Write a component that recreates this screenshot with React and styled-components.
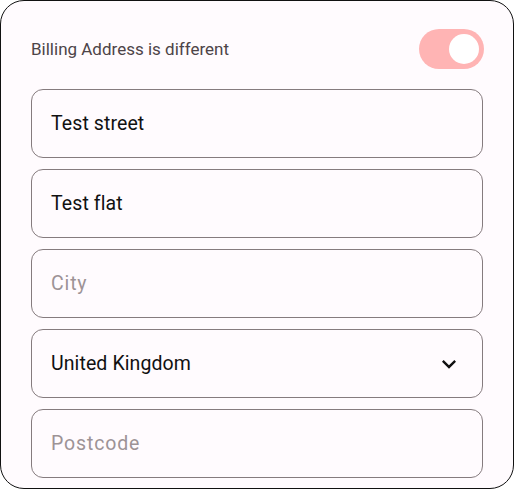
import React, { useState } from "react"
import styled, { createGlobalStyle } from "styled-components"

const Global = createGlobalStyle`
  html, body { margin: 0; padding: 0; background: #ffffff; }
  body { font-family: Roboto, "Noto Sans", sans-serif; }
  * { box-sizing: border-box; }
`

const Card = styled.div`
  width: 514px;
  height: 489px;
  border: 1.5px solid #111;
  border-radius: 24px;
  background: #fffbfe;
  padding: 27px 30px 0 30px;
  display: flex;
  flex-direction: column;
  overflow: hidden;
`

const Header = styled.div`
  display: flex;
  align-items: center;
  justify-content: space-between;
  height: 41px;
  margin-bottom: 20px;
`

const Title = styled.span`
  font-size: 17px;
  color: #4d4448;
`

const Track = styled.button`
  width: 65px;
  height: 40px;
  border: none;
  border-radius: 20px;
  background: ${(p) => (p.$on ? "#ffb4b4" : "#e7e0ec")};
  display: flex;
  align-items: center;
  justify-content: ${(p) => (p.$on ? "flex-end" : "flex-start")};
  padding: 0 5px;
  margin-right: -1px;
  cursor: pointer;
`

const Thumb = styled.span`
  width: 30px;
  height: 30px;
  border-radius: 50%;
  background: #ffffff;
`

const Fields = styled.div`
  display: flex;
  flex-direction: column;
  gap: 11px;
`

const Field = styled.div`
  height: 69px;
  border: 1px solid #857b7e;
  border-radius: 12px;
  display: flex;
  align-items: center;
  justify-content: space-between;
  padding: 0 19px 0 19px;
  font-size: 19.5px;
  color: ${(p) => (p.$placeholder ? "#9d9396" : "#111")};
  letter-spacing: ${(p) => (p.$placeholder ? "0.85px" : "0.1px")};
`

const Chevron = () => (
  <svg width="28" height="28" viewBox="0 0 24 24" fill="#111">
    <path d="M16.59 8.59L12 13.17 7.41 8.59 6 10l6 6 6-6z" />
  </svg>
)

export default function App() {
  const [on, setOn] = useState(true)
  return (
    <>
      <Global />
      <Card>
        <Header>
          <Title>Billing Address is different</Title>
          <Track $on={on} onClick={() => setOn(!on)} aria-label="toggle">
            <Thumb />
          </Track>
        </Header>
        <Fields>
          <Field>Test street</Field>
          <Field>Test flat</Field>
          <Field $placeholder>City</Field>
          <Field>
            United Kingdom
            <Chevron />
          </Field>
          <Field $placeholder>Postcode</Field>
        </Fields>
      </Card>
    </>
  )
}
